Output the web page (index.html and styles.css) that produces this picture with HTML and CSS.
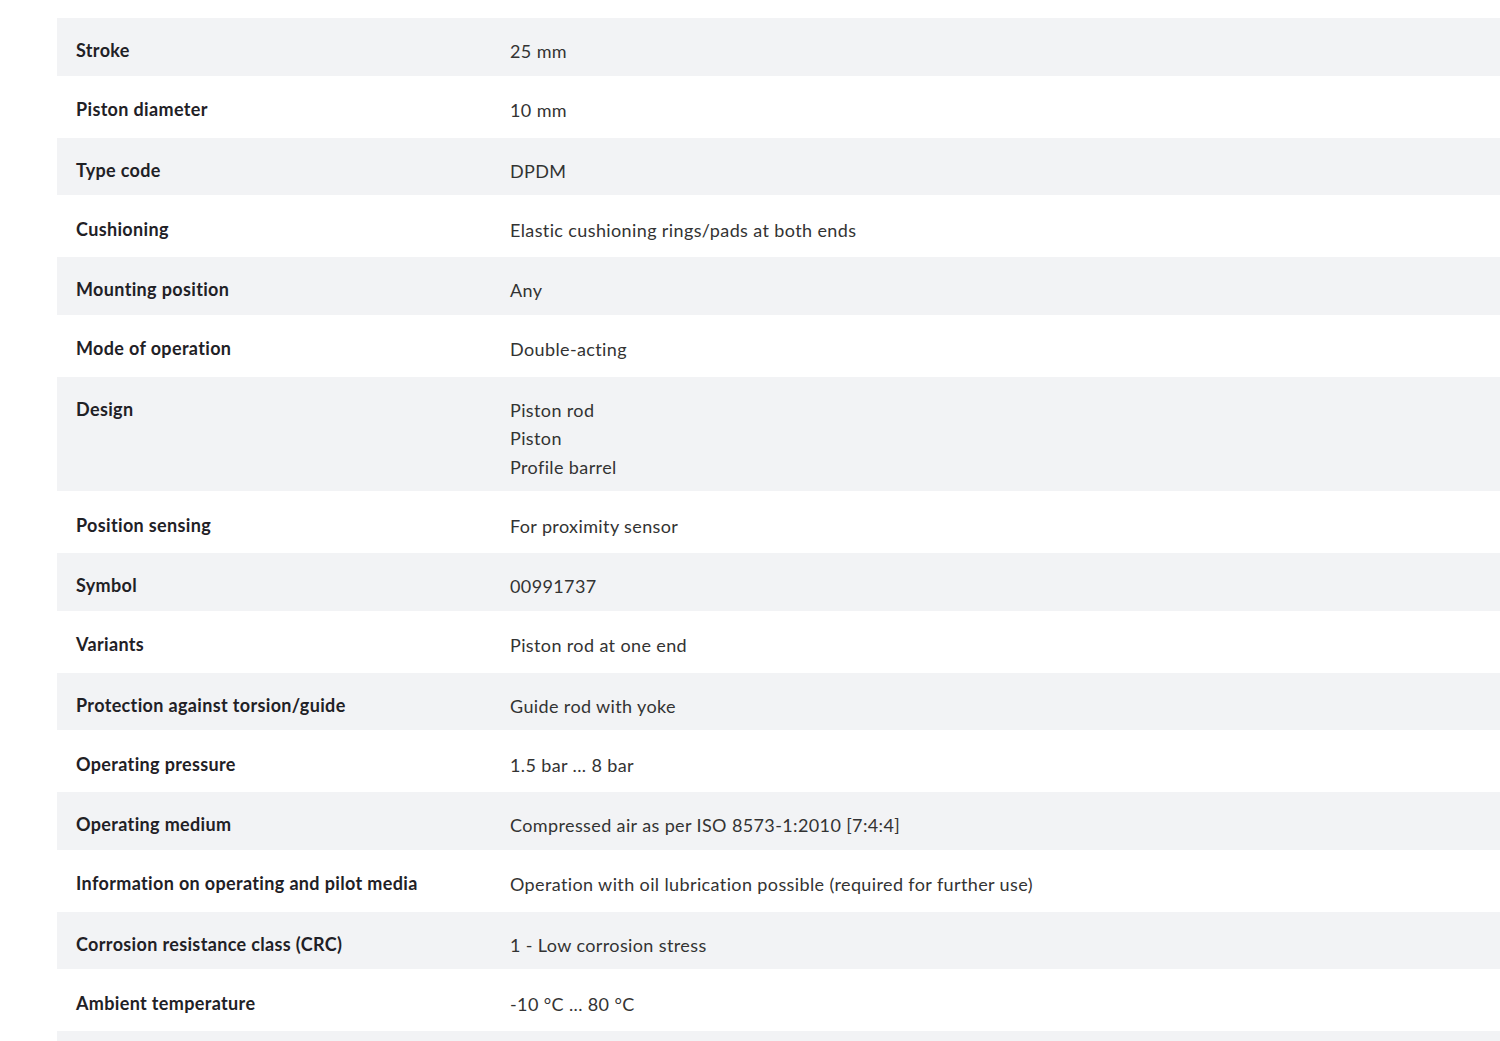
FILE: index.html
```html
<!DOCTYPE html>
<html lang="en">
<head>
<meta charset="utf-8">
<title>Technical data</title>
<link rel="stylesheet" href="styles.css">
</head>
<body>
<div class="specs">
  <div class="row"><div class="label">Stroke</div><div class="value">25 mm</div></div>
  <div class="row"><div class="label">Piston diameter</div><div class="value">10 mm</div></div>
  <div class="row"><div class="label">Type code</div><div class="value">DPDM</div></div>
  <div class="row"><div class="label">Cushioning</div><div class="value">Elastic cushioning rings/pads at both ends</div></div>
  <div class="row"><div class="label">Mounting position</div><div class="value">Any</div></div>
  <div class="row"><div class="label">Mode of operation</div><div class="value">Double-acting</div></div>
  <div class="row"><div class="label">Design</div><div class="value">Piston rod<br>Piston<br>Profile barrel</div></div>
  <div class="row"><div class="label">Position sensing</div><div class="value">For proximity sensor</div></div>
  <div class="row"><div class="label">Symbol</div><div class="value">00991737</div></div>
  <div class="row"><div class="label">Variants</div><div class="value">Piston rod at one end</div></div>
  <div class="row"><div class="label">Protection against torsion/guide</div><div class="value">Guide rod with yoke</div></div>
  <div class="row"><div class="label">Operating pressure</div><div class="value">1.5 bar ... 8 bar</div></div>
  <div class="row"><div class="label">Operating medium</div><div class="value">Compressed air as per ISO 8573-1:2010 [7:4:4]</div></div>
  <div class="row"><div class="label">Information on operating and pilot media</div><div class="value">Operation with oil lubrication possible (required for further use)</div></div>
  <div class="row"><div class="label">Corrosion resistance class (CRC)</div><div class="value">1 - Low corrosion stress</div></div>
  <div class="row"><div class="label">Ambient temperature</div><div class="value">-10 °C ... 80 °C</div></div>
  <div class="row"><div class="label">&nbsp;</div><div class="value">&nbsp;</div></div>
</div>
</body>
</html>
```

FILE: styles.css
```css
html, body {
  margin: 0;
  padding: 0;
  background: #ffffff;
  overflow: hidden;
}
body {
  font-family: Lato, "Liberation Sans", sans-serif;
  font-size: 18px;
  color: #333333;
  height: 1041px;
}
.specs {
  margin: 18px 0 0 57px;
  display: flex;
  flex-direction: column;
}
.row {
  display: grid;
  grid-template-columns: 434px 1fr;
  padding: 20.5px 0 13px 19px;
  line-height: 28.5px;
}
.row:nth-child(odd) {
  background: #f2f3f5;
  padding: 19px 0 10px 19px;
}
.label {
  font-weight: 700;
  color: #1f2126;
  margin-top: -1px;
  letter-spacing: 0.35px;
}
.value {
  color: #333333;
  letter-spacing: 0.38px;
}
```
